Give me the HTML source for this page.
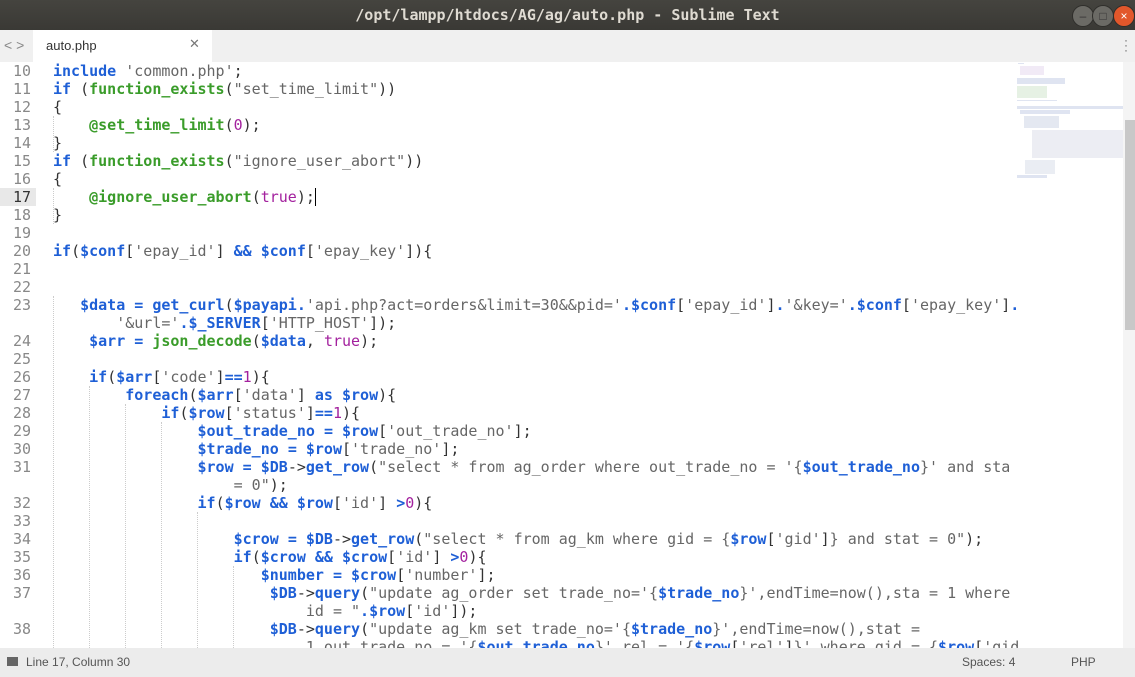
<!DOCTYPE html>
<html><head><meta charset="utf-8"><style>
html,body{margin:0;width:1135px;height:677px;overflow:hidden}
body{background:#fff;position:relative;font-family:"Liberation Sans",sans-serif}
#title{position:absolute;left:0;top:0;width:1135px;height:30px;background:linear-gradient(#45443f,#3a3935);color:#dfdbd2;font:bold 15px "DejaVu Sans Mono",monospace;text-align:center;line-height:30px}
.wb{position:absolute;top:5px;width:20px;height:20px;border-radius:50%;background:#6b6a65;border:1px solid #2f2e2b;color:#333;font-size:12px;line-height:20px;text-align:center}
#tabs{position:absolute;left:0;top:30px;width:1135px;height:32px;background:#f0f0f0}
#tab{position:absolute;left:33px;top:0;width:179px;height:32px;background:#fff}
#code{position:absolute;left:0;top:62px;width:1123px;height:586px;overflow:hidden}
pre{margin:0;font:15px/18px "DejaVu Sans Mono",monospace;color:#333;position:absolute;top:0}
#gut{left:0;width:31px;text-align:right;color:#888}
#src{left:53px}
.k{color:#1e5fd6;font-weight:bold}.f{color:#3a9c2a;font-weight:bold}.s{color:#666}.n{color:#a3219e}
.g{position:absolute;top:0;border-left:1px dotted #ccc;height:586px}
#status{position:absolute;left:0;top:648px;width:1135px;height:29px;background:#ececec;font-size:12px;color:#555;line-height:29px}
.m{position:absolute;height:1px;background:#b8c4e0;opacity:.45}
</style></head><body>
<div id="title">/opt/lampp/htdocs/AG/ag/auto.php - Sublime Text</div>
<div class="wb" style="left:1072px">–</div><div class="wb" style="left:1092px">□</div><div class="wb" style="left:1113px;background:#e2572b;color:#fff">×</div>
<div id="tabs"><div style="position:absolute;left:4px;top:7px;color:#888;font-size:14px">&lt; &gt;</div>
<div id="tab"><span style="position:absolute;left:13px;top:8px;font-size:13px;color:#333">auto.php</span><span style="position:absolute;left:156px;top:6px;font-size:13px;color:#777">✕</span></div>
<div style="position:absolute;left:1124px;top:8px;color:#666;font-size:12px;line-height:5px">·<br>·<br>·</div></div>
<div id="code">
<div style="position:absolute;left:0;top:126px;width:36px;height:18px;background:#e8e8e8"></div>
<div class="g" style="left:53px;top:54px;height:36px"></div><div class="g" style="left:53px;top:126px;height:36px"></div>
<div class="g" style="left:53px;top:234px"></div><div class="g" style="left:89px;top:324px"></div><div class="g" style="left:125px;top:342px"></div><div class="g" style="left:161px;top:360px"></div><div class="g" style="left:197px;top:450px"></div><div class="g" style="left:233px;top:504px"></div>
<pre id="gut">10
11
12
13
14
15
16
<span style="color:#333">17</span>
18
19
20
21
22
23

24
25
26
27
28
29
30
31

32
33
34
35
36
37

38</pre>
<pre id="src"><span class="k">include</span> <span class="s">'common.php'</span>;
<span class="k">if</span> (<span class="f">function_exists</span>(<span class="s">"set_time_limit"</span>))
{
    <span class="f">@set_time_limit</span>(<span class="n">0</span>);
}
<span class="k">if</span> (<span class="f">function_exists</span>(<span class="s">"ignore_user_abort"</span>))
{
    <span class="f">@ignore_user_abort</span>(<span class="n">true</span>);<span style="border-left:1px solid #000"></span>
}

<span class="k">if</span>(<span class="k">$conf</span>[<span class="s">'epay_id'</span>] <span class="k">&amp;&amp;</span> <span class="k">$conf</span>[<span class="s">'epay_key'</span>]){


   <span class="k">$data</span> <span class="k">=</span> <span class="k">get_curl</span>(<span class="k">$payapi</span><span class="k">.</span><span class="s">'api.php?act=orders&amp;limit=30&amp;&amp;pid='</span><span class="k">.$conf</span>[<span class="s">'epay_id'</span>]<span class="k">.</span><span class="s">'&amp;key='</span><span class="k">.$conf</span>[<span class="s">'epay_key'</span>]<span class="k">.</span>
       <span class="s">'&amp;url='</span><span class="k">.$_SERVER</span>[<span class="s">'HTTP_HOST'</span>]);
    <span class="k">$arr</span> <span class="k">=</span> <span class="f">json_decode</span>(<span class="k">$data</span>, <span class="n">true</span>);

    <span class="k">if</span>(<span class="k">$arr</span>[<span class="s">'code'</span>]<span class="k">==</span><span class="n">1</span>){
        <span class="k">foreach</span>(<span class="k">$arr</span>[<span class="s">'data'</span>] <span class="k">as</span> <span class="k">$row</span>){
            <span class="k">if</span>(<span class="k">$row</span>[<span class="s">'status'</span>]<span class="k">==</span><span class="n">1</span>){
                <span class="k">$out_trade_no</span> <span class="k">=</span> <span class="k">$row</span>[<span class="s">'out_trade_no'</span>];
                <span class="k">$trade_no</span> <span class="k">=</span> <span class="k">$row</span>[<span class="s">'trade_no'</span>];
                <span class="k">$row</span> <span class="k">=</span> <span class="k">$DB</span>-&gt;<span class="k">get_row</span>(<span class="s">"select * from ag_order where out_trade_no = '{</span><span class="k">$out_trade_no</span><span class="s">}' and sta</span>
<span class="s">                    = 0"</span>);
                <span class="k">if</span>(<span class="k">$row</span> <span class="k">&amp;&amp;</span> <span class="k">$row</span>[<span class="s">'id'</span>] <span class="k">&gt;</span><span class="n">0</span>){

                    <span class="k">$crow</span> <span class="k">=</span> <span class="k">$DB</span>-&gt;<span class="k">get_row</span>(<span class="s">"select * from ag_km where gid = {</span><span class="k">$row</span>[<span class="s">'gid'</span>]<span class="s">} and stat = 0"</span>);
                    <span class="k">if</span>(<span class="k">$crow</span> <span class="k">&amp;&amp;</span> <span class="k">$crow</span>[<span class="s">'id'</span>] <span class="k">&gt;</span><span class="n">0</span>){
                       <span class="k">$number</span> <span class="k">=</span> <span class="k">$crow</span>[<span class="s">'number'</span>];
                        <span class="k">$DB</span>-&gt;<span class="k">query</span>(<span class="s">"update ag_order set trade_no='{</span><span class="k">$trade_no</span><span class="s">}',endTime=now(),sta = 1 where</span>
<span class="s">                            id = "</span><span class="k">.$row</span>[<span class="s">'id'</span>]);
                        <span class="k">$DB</span>-&gt;<span class="k">query</span>(<span class="s">"update ag_km set trade_no='{</span><span class="k">$trade_no</span><span class="s">}',endTime=now(),stat =</span>
<span class="s">                            1,out_trade_no = '{</span><span class="k">$out_trade_no</span><span class="s">}',rel = '{</span><span class="k">$row</span>[<span class="s">'rel'</span>]<span class="s">}' where gid = {</span><span class="k">$row</span>[<span class="s">'gid</span></pre>
</div>
<div class="m" style="left:1018px;top:63px;width:6px"></div>
<div class="m" style="left:1020px;top:66px;width:24px;height:9px;background:#e0d0ea"></div>
<div class="m" style="left:1017px;top:78px;width:48px;height:6px"></div>
<div class="m" style="left:1017px;top:86px;width:30px;height:12px;background:#c8e0c4"></div>
<div class="m" style="left:1017px;top:100px;width:40px"></div>
<div class="m" style="left:1017px;top:106px;width:108px;height:3px"></div>
<div class="m" style="left:1020px;top:110px;width:50px;height:4px"></div>
<div class="m" style="left:1024px;top:116px;width:35px;height:12px;background:#c4cde0"></div>
<div class="m" style="left:1032px;top:130px;width:93px;height:28px;background:#d4d8e4"></div>
<div class="m" style="left:1025px;top:160px;width:30px;height:14px;background:#d0d6e4"></div>
<div class="m" style="left:1017px;top:175px;width:30px;height:3px"></div>
<div style="position:absolute;left:1123px;top:62px;width:12px;height:586px;background:#f4f4f4"><div style="position:absolute;left:2px;top:58px;width:10px;height:210px;background:#c8c8c8"></div></div>
<div id="status"><span style="position:absolute;left:7px;top:9px;width:11px;height:9px;background:#666"></span><span style="position:absolute;left:26px">Line 17, Column 30</span><span style="position:absolute;left:962px">Spaces: 4</span><span style="position:absolute;left:1071px">PHP</span></div>
</body></html>
